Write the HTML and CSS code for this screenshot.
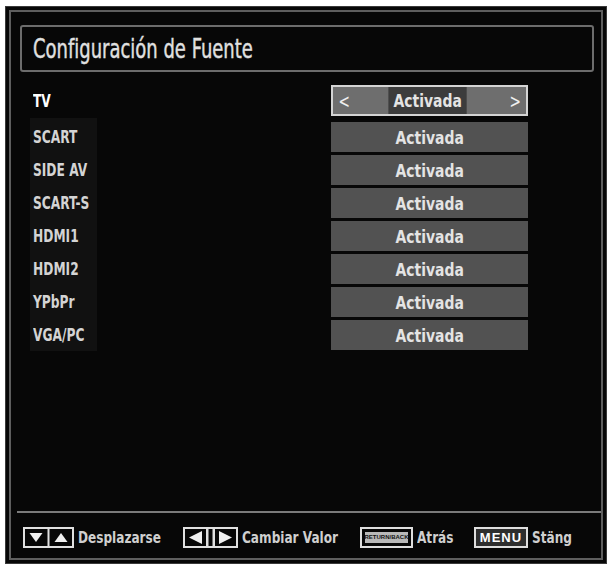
FILE: index.html
```html
<!DOCTYPE html>
<html lang="es">
<head>
<meta charset="utf-8">
<title>Configuración de Fuente</title>
<link rel="stylesheet" href="styles.css">
</head>
<body>
<div class="screen">
  <div class="frame">
    <header class="title-bar">
      <h1 class="title">Configuración de Fuente</h1>
    </header>

    <div class="settings">
      <div class="labels">
        <div class="label label-active"><span class="label-text">TV</span></div>
        <div class="label-group">
          <div class="label"><span class="label-text">SCART</span></div>
          <div class="label"><span class="label-text">SIDE AV</span></div>
          <div class="label"><span class="label-text">SCART-S</span></div>
          <div class="label"><span class="label-text">HDMI1</span></div>
          <div class="label"><span class="label-text">HDMI2</span></div>
          <div class="label"><span class="label-text">YPbPr</span></div>
          <div class="label"><span class="label-text">VGA/PC</span></div>
        </div>
      </div>
      <div class="values">
        <div class="value value-active">
          <span class="arrow">&lt;</span>
          <span class="value-text value-text-active">Activada</span>
          <span class="arrow">&gt;</span>
        </div>
        <div class="value"><span class="value-text">Activada</span></div>
        <div class="value"><span class="value-text">Activada</span></div>
        <div class="value"><span class="value-text">Activada</span></div>
        <div class="value"><span class="value-text">Activada</span></div>
        <div class="value"><span class="value-text">Activada</span></div>
        <div class="value"><span class="value-text">Activada</span></div>
        <div class="value"><span class="value-text">Activada</span></div>
      </div>
    </div>

    <footer class="hints">
      <div class="hint">
        <svg class="key-icon" width="51" height="21" viewBox="0 0 51 21">
          <rect x="1" y="1" width="49" height="19" fill="none" stroke="#e0e0e0" stroke-width="2"/>
          <line x1="25.5" y1="1" x2="25.5" y2="20" stroke="#e0e0e0" stroke-width="2"/>
          <path d="M6.5 6h13l-6.5 9z" fill="#f0f0f0"/>
          <path d="M31.5 15h13l-6.5-9z" fill="#f0f0f0"/>
        </svg>
        <span class="hint-text">Desplazarse</span>
      </div>
      <div class="hint">
        <svg class="key-icon" width="55" height="21" viewBox="0 0 55 21">
          <rect x="1" y="1" width="53" height="19" fill="none" stroke="#e0e0e0" stroke-width="2"/>
          <path d="M6 10.5L19 4v13z" fill="#f0f0f0"/>
          <rect x="23" y="1" width="2.5" height="19" fill="#e0e0e0"/>
          <rect x="29.5" y="1" width="2.5" height="19" fill="#e0e0e0"/>
          <path d="M49 10.5L36 4v13z" fill="#f0f0f0"/>
        </svg>
        <span class="hint-text">Cambiar Valor</span>
      </div>
      <div class="hint">
        <span class="key key-back"><span class="key-back-label">RETURN/BACK</span></span>
        <span class="hint-text">Atrás</span>
      </div>
      <div class="hint">
        <span class="key key-menu">MENU</span>
        <span class="hint-text">Stäng</span>
      </div>
    </footer>
  </div>
</div>
</body>
</html>
```

FILE: styles.css
```css
* {
  box-sizing: border-box;
}

body {
  margin: 0;
  background: #ffffff;
  font-family: "DejaVu Sans Condensed", "DejaVu Sans", sans-serif;
  font-stretch: condensed;
}

/* TV screen with its double outline */
.screen {
  margin: 6px 0 0 5px;
  width: 602px;
  height: 558px;
  background: #070707;
  border: 1px solid #3a3a3a;
  padding: 3px;
}

.frame {
  height: 100%;
  border: 2px solid #5e5e5e;
  display: flex;
  flex-direction: column;
}

/* Menu title; the on-screen typeface is narrower than any installed one,
   so the text is squeezed horizontally */
.title-bar {
  margin: 13px 7px 0 9px;
  height: 47px;
  border: 2px solid #6c6c6c;
  border-radius: 3px;
  display: flex;
  align-items: center;
  padding-left: 11px;
}

.title {
  margin: 0;
  font-size: 27px;
  font-weight: normal;
  color: #e0e0e0;
  white-space: nowrap;
  -webkit-text-stroke: 0.4px #e0e0e0;
  transform: scaleX(0.74);
  transform-origin: left center;
}

/* Source list */
.settings {
  display: flex;
  margin: 13px 0 0 19px;
}

.labels {
  width: 301px;
}

.label {
  height: 30px;
  display: flex;
  align-items: center;
  padding-left: 3px;
  font-size: 17px;
  font-weight: bold;
  color: #d4d4d4;
  white-space: nowrap;
}

.label-text {
  display: inline-block;
  transform: scaleX(0.8);
  transform-origin: left center;
}

.label-active {
  height: 31px;
  margin-bottom: 2px;
  color: #ffffff;
}

.label-group {
  width: 67px;
  background: #111111;
  padding: 4px 0 1px;
  display: flex;
  flex-direction: column;
  gap: 3px;
}

.values {
  width: 197px;
  display: flex;
  flex-direction: column;
  gap: 3px;
}

.value {
  height: 30px;
  background: #525252;
  display: flex;
  align-items: center;
  justify-content: center;
  font-size: 18px;
  font-weight: bold;
  color: #e4e4e4;
}

.value-text {
  display: inline-block;
  transform: scaleX(0.86);
}

.value-active {
  height: 31px;
  margin-bottom: 3px;
  border: 2px solid #d4d4d4;
  background: #6e6e6e;
  justify-content: space-between;
  padding: 0 4px;
}

.value-text-active {
  height: 100%;
  display: flex;
  align-items: center;
  padding: 0 6px;
  margin-left: -4px;
  background: #3c3c3c;
}

.arrow {
  font-size: 19px;
  font-weight: normal;
  color: #f0f0f0;
  transform: scaleX(0.8);
}

/* Remote key legend */
.hints {
  margin: auto 0 0 6px;
  height: 47px;
  border-top: 2px solid #7a7a7a;
  padding: 3px 0 0 6px;
  display: grid;
  grid-template-columns: 160px 177px 114px auto;
  align-items: center;
}

.hint {
  display: flex;
  align-items: center;
  gap: 4px;
  font-size: 16px;
  font-weight: bold;
  color: #cfcfcf;
  white-space: nowrap;
}

.hint-text {
  display: inline-block;
  transform: scaleX(0.84);
  transform-origin: left center;
}

.key-icon {
  display: block;
  flex: none;
}

.key {
  flex: none;
  height: 21px;
  border: 2px solid #dedede;
  display: flex;
  align-items: center;
  justify-content: center;
}

.key-back {
  width: 53px;
  padding: 3px;
}

.key-back-label {
  width: 100%;
  height: 100%;
  background: #b8b8b8;
  color: #111111;
  font-family: "Liberation Sans", sans-serif;
  font-stretch: normal;
  font-size: 6px;
  font-weight: bold;
  display: flex;
  align-items: center;
  justify-content: center;
}

.key-menu {
  width: 54px;
  background: #2e2e2e;
  color: #ffffff;
  font-family: "Liberation Sans", sans-serif;
  font-stretch: normal;
  font-size: 13px;
  font-weight: bold;
  letter-spacing: 1px;
}
```
